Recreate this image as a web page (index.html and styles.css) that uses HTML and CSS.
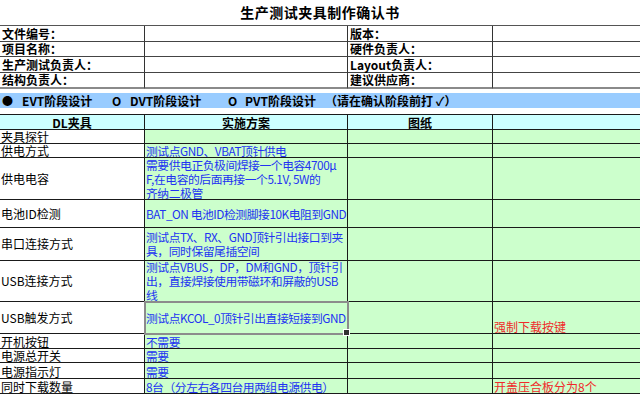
FILE: index.html
```html
<!DOCTYPE html>
<html lang="zh-CN">
<head>
<meta charset="utf-8">
<title>生产测试夹具制作确认书</title>
<link rel="stylesheet" href="styles.css">
</head>
<body>
<div class="sheet">
  <div class="title">生产测试夹具制作确认书</div>

  <div class="info">
    <div class="ic lbl">文件编号：</div><div class="ic"></div><div class="ic lbl">版本：</div><div class="ic end"></div>
    <div class="ic lbl">项目名称：</div><div class="ic"></div><div class="ic lbl">硬件负责人：</div><div class="ic end"></div>
    <div class="ic lbl">生产测试负责人：</div><div class="ic"></div><div class="ic lbl">Layout负责人：</div><div class="ic end"></div>
    <div class="ic lbl last">结构负责人：</div><div class="ic last"></div><div class="ic lbl last">建议供应商：</div><div class="ic end last"></div>
  </div>

  <div class="band">
    <span class="mark">●</span><span class="stage s1">EVT阶段设计</span>
    <span class="mark m2">O</span><span class="stage s2">DVT阶段设计</span>
    <span class="mark m3">O</span><span class="stage s3">PVT阶段设计</span>
    <span class="note">（请在确认阶段前打 ✓）</span>
  </div>

  <div class="plan">
    <div class="pc head">DL夹具</div><div class="pc head">实施方案</div><div class="pc head">图纸</div><div class="pc head end"></div>

    <div class="pc name">夹具探针</div><div class="pc g"></div><div class="pc g"></div><div class="pc g end"></div>

    <div class="pc name">供电方式</div><div class="pc g blue">测试点GND、VBAT顶针供电</div><div class="pc g"></div><div class="pc g end"></div>

    <div class="pc name mid">供电电容</div><div class="pc g blue mid">需要供电正负极间焊接一个电容4700μ<br>F,在电容的后面再接一个5.1V, 5W的<br>齐纳二极管</div><div class="pc g"></div><div class="pc g end"></div>

    <div class="pc name mid">电池ID检测</div><div class="pc g blue mid">BAT_ON 电池ID检测脚接10K电阻到GND</div><div class="pc g"></div><div class="pc g end"></div>

    <div class="pc name mid">串口连接方式</div><div class="pc g blue mid">测试点TX、RX、GND顶针引出接口到夹<br>具，同时保留尾插空间</div><div class="pc g"></div><div class="pc g end"></div>

    <div class="pc name mid">USB连接方式</div><div class="pc g blue mid">测试点VBUS，DP，DM和GND，顶针引<br>出，直接焊接使用带磁环和屏蔽的USB<br>线</div><div class="pc g"></div><div class="pc g end"></div>

    <div class="pc name mid">USB触发方式</div><div class="pc g blue mid sel">测试点KCOL_0顶针引出直接短接到GND</div><div class="pc g"></div><div class="pc g end red">强制下载按键</div>

    <div class="pc name">开机按钮</div><div class="pc g blue">不需要</div><div class="pc g"></div><div class="pc g end"></div>

    <div class="pc name">电源总开关</div><div class="pc g blue">需要</div><div class="pc g"></div><div class="pc g end"></div>

    <div class="pc name">电源指示灯</div><div class="pc g blue">需要</div><div class="pc g"></div><div class="pc g end"></div>

    <div class="pc name">同时下载数量</div><div class="pc g blue">8台（分左右各四台用两组电源供电）</div><div class="pc g"></div><div class="pc g end red">开盖压合板分为8个</div>
  </div>
</div>
</body>
</html>
```

FILE: styles.css
```css
* {
  box-sizing: border-box;
  margin: 0;
  padding: 0;
}

html, body {
  background: #ffffff;
}

body {
  margin: 0;
  width: 640px;
  height: 395px;
  overflow: hidden;
  font-family: "Noto Sans CJK SC", "Noto Sans", sans-serif;
  font-size: 12px;
  color: #000000;
}

.sheet {
  display: flex;
  flex-direction: column;
  width: 640px;
}

.title {
  height: 25px;
  display: flex;
  align-items: center;
  justify-content: center;
  padding-bottom: 2px;
  font-size: 14px;
  font-weight: 700;
  letter-spacing: 0.5px;
  line-height: 1;
}

/* top info table */
.info {
  display: grid;
  grid-template-columns: 145px 203px 145px 1fr;
  grid-template-rows: 16px 15px 16px 16px;
  border-top: 1px solid #555555;
}

.ic {
  display: flex;
  align-items: flex-end;
  border-right: 1px solid #333333;
  border-bottom: 1px solid #444444;
  line-height: 14px;
  white-space: nowrap;
}

.ic.lbl {
  padding-left: 2px;
  font-weight: 700;
}

.ic.end {
  border-right: 0;
}

.ic.last {
  border-bottom: 2px solid #8a8a8a;
}

/* stage band */
.band {
  margin-top: 4px;
  height: 15px;
  display: flex;
  align-items: center;
  background: #99ccff;
  font-weight: 700;
  line-height: 15px;
  white-space: nowrap;
  padding-left: 2px;
}

.mark {
  display: inline-block;
  width: 20px;
  font-size: 11px;
}

.m2, .m3 {
  width: 18px;
  font-size: 12px;
}

.m3 {
  width: 17px;
}

.stage {
  display: inline-block;
}

.s1 { width: 90px; }
.s2 { width: 98px; }
.s3 { width: 80px; }

.note {
  display: inline-block;
}

/* plan table */
.plan {
  margin-top: 6px;
  display: grid;
  grid-template-columns: 145px 203px 145px 1fr;
  grid-template-rows: 15px 14px 14px 42px 28px 33px 41px 32px 15px 14px 16px 15px;
  border-top: 1px solid #1a1a1a;
}

.pc {
  position: relative;
  display: flex;
  align-items: flex-end;
  border-right: 1px solid #1a1a1a;
  border-bottom: 1px solid #1a1a1a;
  padding-left: 1px;
  line-height: 13px;
  white-space: nowrap;
}

.pc.end {
  border-right: 0;
}

.pc.head {
  background: #ccffff;
  justify-content: center;
  align-items: center;
  font-weight: 700;
  padding-left: 0;
}

.pc.g {
  background: #ccffcc;
}

.pc.mid {
  align-items: center;
  line-height: 14px;
}

.pc.blue {
  color: #2233f2;
  letter-spacing: -0.45px;
  font-size: 11.8px;
}

.pc.red {
  color: #f02a2a;
  padding-left: 1px;
  padding-bottom: 0;
}

.pc.sel {
  outline: 2px solid #8c8c8c;
  outline-offset: -1px;
  z-index: 1;
}

.pc.sel::after {
  content: "";
  position: absolute;
  right: -3px;
  bottom: -3px;
  width: 5px;
  height: 5px;
  background: #333333;
  border: 1px solid #ffffff;
}
```
